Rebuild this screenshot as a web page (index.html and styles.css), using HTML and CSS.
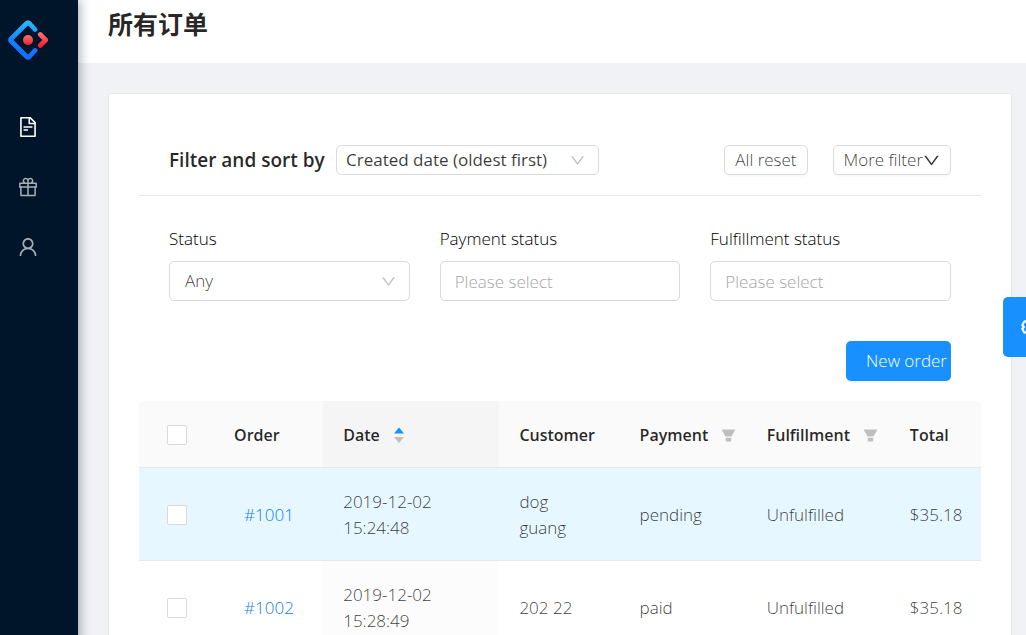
FILE: index.html
```html
<!DOCTYPE html>
<html lang="zh-CN">
<head>
<meta charset="utf-8">
<meta name="viewport" content="width=device-width, initial-scale=1">
<title>所有订单</title>
<link rel="stylesheet" href="styles.css">
</head>
<body>
<svg class="sprite" aria-hidden="true">
  <symbol id="down" viewBox="64 64 896 896"><path d="M884 256h-75c-5.100 0-9.900 2.500-12.900 6.600L512 654.200 227.900 262.600c-3-4.100-7.800-6.600-12.900-6.600h-75c-6.500 0-10.300 7.400-6.500 12.700l352.600 486.100c12.800 17.600 39 17.600 51.700 0l352.600-486.100c3.900-5.300.1-12.700-6.400-12.700z"/></symbol>
  <symbol id="filter" viewBox="64 64 896 896"><path d="M349 838c0 17.700 14.200 32 31.800 32h262.400c17.600 0 31.800-14.300 31.800-32V642H349v196zm531.100-684H143.900c-24.500 0-39.800 26.700-27.500 48l221.300 376h348.800l221.300-376c12.100-21.300-3.200-48-27.700-48z"/></symbol>
</svg>
<div class="layout">
  <aside class="sidebar">
    <a class="logo" href="#" aria-label="Home">
      <svg viewBox="0 0 40 40" width="40" height="40" fill="none" stroke-linecap="round" stroke-linejoin="round">
        <defs>
          <linearGradient id="blue" x1="0" y1="0" x2="0" y2="1"><stop offset="0" stop-color="#29b6ff"/><stop offset="0.5" stop-color="#1681ff"/><stop offset="1" stop-color="#0f6fff"/></linearGradient>
          <linearGradient id="red" x1="0" y1="0" x2="0" y2="1"><stop offset="0" stop-color="#ff6b70"/><stop offset="1" stop-color="#f5222d"/></linearGradient>
        </defs>
        <path d="M27 9.500L21.500 3.500Q20 2 18.500 3.500L3.200 18.700Q2 20 3.200 21.300L18.500 36.500Q20 38 21.500 36.500L27 30.500" stroke="url(#blue)" stroke-width="4.800"/>
        <path d="M32.200 14.500L37.700 20L32.200 25.500" stroke="url(#red)" stroke-width="4.600"/>
        <circle cx="20" cy="20" r="5" fill="url(#red)"/>
      </svg>
    </a>
    <nav class="menu">
      <a class="menu-item active" href="#" aria-label="Orders"><svg class="menu-icon" viewBox="64 64 896 896"><path d="M854.600 288.600L639.400 73.400c-6-6-14.100-9.400-22.600-9.400H192c-17.700 0-32 14.300-32 32v832c0 17.700 14.300 32 32 32h640c17.700 0 32-14.300 32-32V311.300c0-8.500-3.400-16.700-9.400-22.700zM790.200 326H602V137.800L790.200 326zm1.800 562H232V136h302v216a42 42 0 0042 42h216v494zM504 618H320c-4.400 0-8 3.600-8 8v48c0 4.400 3.600 8 8 8h184c4.400 0 8-3.600 8-8v-48c0-4.400-3.600-8-8-8zM312 490v48c0 4.400 3.600 8 8 8h384c4.400 0 8-3.600 8-8v-48c0-4.400-3.600-8-8-8H320c-4.400 0-8 3.600-8 8z"/></svg></a>
      <a class="menu-item" href="#" aria-label="Products"><svg class="menu-icon" viewBox="64 64 896 896"><path d="M880 310H732.400c13.600-21.400 21.600-46.800 21.600-74 0-76.100-61.900-138-138-138-41.400 0-78.700 18.400-104 47.400-25.300-29-62.600-47.400-104-47.400-76.100 0-138 61.900-138 138 0 27.200 7.900 52.600 21.600 74H144c-17.700 0-32 14.300-32 32v200c0 4.400 3.600 8 8 8h40v344c0 17.700 14.300 32 32 32h640c17.700 0 32-14.300 32-32V550h40c4.400 0 8-3.600 8-8V342c0-17.700-14.300-32-32-32zm-334-74c0-38.600 31.400-70 70-70s70 31.400 70 70-31.400 70-70 70h-70v-70zm-138-70c38.600 0 70 31.400 70 70v70h-70c-38.600 0-70-31.400-70-70s31.400-70 70-70zM180 482V378h298v104H180zm48 68h250v308H228V550zm568 308H546V550h250v308zm48-376H546V378h298v104z"/></svg></a>
      <a class="menu-item" href="#" aria-label="Customers"><svg class="menu-icon" viewBox="64 64 896 896"><path d="M858.500 763.600a374 374 0 00-80.600-119.500 375.630 375.630 0 00-119.500-80.600c-.4-.2-.8-.3-1.200-.5C719.500 518 760 444.700 760 362c0-137-111-248-248-248S264 225 264 362c0 82.700 40.500 156 102.800 201.100-.4.2-.8.3-1.200.5-44.800 18.900-85 46-119.500 80.600a375.630 375.630 0 00-80.600 119.500A371.700 371.700 0 00136 901.800a8 8 0 008 8.200h60c4.400 0 7.900-3.500 8-7.800 2-77.200 33-149.500 87.800-204.300 56.700-56.700 132-87.900 212.200-87.900s155.500 31.200 212.200 87.900C779 752.700 810 825 812 902.200c.1 4.400 3.600 7.800 8 7.800h60a8 8 0 008-8.200c-1-47.800-10.900-94.300-29.500-138.200zM512 534c-45.900 0-89.100-17.900-121.600-50.400S340 407.900 340 362c0-45.900 17.900-89.100 50.400-121.600S466.100 190 512 190s89.100 17.900 121.600 50.400S684 316.100 684 362c0 45.900-17.900 89.100-50.400 121.600S557.900 534 512 534z"/></svg></a>
    </nav>
  </aside>
  <div class="main">
    <header class="page-header"><h1>所有订单</h1></header>
    <main class="card">
      <div class="toolbar">
        <label class="toolbar-title" for="sort">Filter and sort by</label>
        <div class="select select-small">
          <select id="sort"><option>Created date (oldest first)</option></select>
          <svg class="chevron"><use href="#down"/></svg>
        </div>
        <div class="toolbar-actions">
          <button class="button" type="button">All reset</button>
          <button class="button" type="button">More filter<svg class="button-icon"><use href="#down"/></svg></button>
        </div>
      </div>
      <div class="filters">
        <div class="field">
          <label for="status">Status</label>
          <div class="select">
            <select id="status"><option>Any</option></select>
            <svg class="chevron"><use href="#down"/></svg>
          </div>
        </div>
        <div class="field">
          <label for="payment">Payment status</label>
          <input class="text-input" id="payment" type="text" placeholder="Please select">
        </div>
        <div class="field">
          <label for="fulfillment">Fulfillment status</label>
          <input class="text-input" id="fulfillment" type="text" placeholder="Please select">
        </div>
      </div>
      <div class="actions"><button class="primary" type="button">New order</button></div>
      <table class="orders">
        <colgroup><col class="col-check"><col class="col-order"><col class="col-date"><col class="col-customer"><col class="col-payment"><col class="col-fulfillment"><col class="col-total"></colgroup>
        <thead>
          <tr>
            <th class="check"><input type="checkbox" aria-label="Select all"></th>
            <th>Order</th>
            <th class="sorted"><span class="heading">Date<svg class="sorter" viewBox="0 0 12 18"><path class="sort-up" d="M6 1.500L11 7.500H1z"/><path class="sort-down" d="M1 11H11L6 17z"/></svg></span></th>
            <th>Customer</th>
            <th><span class="heading">Payment<svg class="filter-icon"><use href="#filter"/></svg></span></th>
            <th><span class="heading">Fulfillment<svg class="filter-icon"><use href="#filter"/></svg></span></th>
            <th>Total</th>
          </tr>
        </thead>
        <tbody>
          <tr class="hovered">
            <td class="check"><input type="checkbox" aria-label="Select #1001"></td>
            <td><a class="order-link" href="#">#1001</a></td>
            <td class="sorted">2019-12-02 15:24:48</td>
            <td>dog<br>guang</td>
            <td>pending</td>
            <td>Unfulfilled</td>
            <td>$35.18</td>
          </tr>
          <tr>
            <td class="check"><input type="checkbox" aria-label="Select #1002"></td>
            <td><a class="order-link" href="#">#1002</a></td>
            <td class="sorted">2019-12-02 15:28:49</td>
            <td>202 22</td>
            <td>paid</td>
            <td>Unfulfilled</td>
            <td>$35.18</td>
          </tr>
        </tbody>
      </table>
    </main>
  </div>
</div>
<button class="settings" type="button" aria-label="Settings">
  <svg viewBox="0 0 24 24" width="24" height="24" fill="none" stroke="#fff" stroke-width="2" stroke-linejoin="round"><circle cx="12" cy="12" r="3.500"/><path d="M9 3h6l.8 2.600 2 1.200 2.700-.6 2.300 4-1.800 1.800 1.800 1.800-2.300 4-2.700-.6-2 1.200L15 21H9l-.8-2.600-2-1.200-2.700.6-2.300-4L3 12 1.200 10.200l2.300-4 2.700.6 2-1.200z"/></svg>
</button>
</body>
</html>
```
FILE: styles.css
```css
* {
  box-sizing: border-box;
}

body {
  margin: 0;
  height: 100vh;
  overflow: hidden;
  background: #f0f2f5;
  color: rgba(0, 0, 0, 0.78);
  font-family: "Open Sans", "Noto Sans CJK SC", sans-serif;
  font-size: 17px;
  font-weight: 300;
  line-height: 26px;
}

button,
input,
select {
  font: inherit;
  color: inherit;
}

svg {
  fill: currentColor;
}

.sprite {
  display: none;
}

.layout {
  display: flex;
  min-height: 100vh;
}

.sidebar {
  flex: 0 0 78px;
  z-index: 1;
  padding-top: 20px;
  background: #001529;
  box-shadow: 2px 0 10px rgba(0, 21, 41, 0.35);
}

.logo {
  display: block;
  height: 40px;
  padding-left: 8px;
}

.logo svg {
  display: block;
  fill: none;
}

.menu {
  display: flex;
  flex-direction: column;
  padding-top: 37px;
}

.menu-item {
  display: flex;
  align-items: center;
  height: 60px;
  padding-left: 18px;
  color: rgba(255, 255, 255, 0.65);
}

.menu-item.active {
  color: #fff;
}

.menu-icon {
  width: 20px;
  height: 20px;
}

.main {
  flex: 1;
  min-width: 0;
}

.page-header {
  height: 63px;
  padding: 3px 30px;
  background: #fff;
}

h1 {
  margin: 0;
  color: rgba(0, 0, 0, 0.85);
  font-family: "Noto Sans CJK SC", sans-serif;
  font-size: 25px;
  font-weight: 700;
  line-height: 40px;
}

.card {
  margin: 30px 14px 30px 30px;
  padding: 30px;
  border: 1px solid #e8e8e8;
  border-radius: 2px;
  background: #fff;
}

.toolbar {
  display: flex;
  align-items: center;
  padding: 21px 30px 20px;
  border-bottom: 1px solid #e8e8e8;
}

.toolbar-title {
  width: 167px;
  color: rgba(0, 0, 0, 0.85);
  font-size: 19px;
  font-weight: 600;
  white-space: nowrap;
}

.select {
  position: relative;
  display: flex;
}

.select select {
  width: 100%;
  height: 40px;
  padding: 0 40px 0 15px;
  border: 1px solid #d9d9d9;
  border-radius: 5px;
  background: #fff;
  appearance: none;
}

.select-small {
  width: 263px;
}

.select-small select {
  height: 30px;
  padding-left: 9px;
  font-weight: 500;
}

.chevron {
  position: absolute;
  top: 0;
  right: 14px;
  bottom: 0;
  width: 15px;
  height: 15px;
  margin: auto;
  color: #bfbfbf;
  pointer-events: none;
}

.toolbar-actions {
  display: flex;
  gap: 25px;
  margin-left: auto;
}

.button {
  display: flex;
  align-items: center;
  height: 30px;
  padding: 0 10px;
  border: 1px solid #d9d9d9;
  border-radius: 5px;
  background: #fff;
  box-shadow: 0 2px 0 rgba(0, 0, 0, 0.02);
  white-space: nowrap;
}

.button-icon {
  width: 17px;
  height: 17px;
}

.filters {
  display: grid;
  grid-template-columns: repeat(3, 1fr);
  gap: 30px;
  padding: 30px 30px 40px;
}

.field {
  display: flex;
  flex-direction: column;
  gap: 9px;
}

.field label {
  color: #000;
}

.text-input {
  width: 100%;
  height: 40px;
  padding: 0 14px;
  border: 1px solid #d9d9d9;
  border-radius: 5px;
}

.text-input::placeholder {
  color: #a6a6a6;
}

.actions {
  display: flex;
  justify-content: flex-end;
  padding: 0 30px 20px;
}

.primary {
  height: 40px;
  padding: 0 4px 0 20px;
  border: 0;
  border-radius: 5px;
  background: #1890ff;
  box-shadow: 0 2px 0 rgba(0, 0, 0, 0.04);
  color: #fff;
  white-space: nowrap;
}

.orders {
  width: 100%;
  table-layout: fixed;
  border-collapse: separate;
  border-spacing: 0;
  text-align: left;
}

.col-check { width: 75px; }
.col-order { width: 109px; }
.col-date { width: 176px; }
.col-customer { width: 120px; }
.col-payment { width: 127px; }
.col-fulfillment { width: 143px; }
.col-total { width: 91px; }

.orders th,
.orders td {
  padding: 21px 20px 19px;
  border-bottom: 1px solid #e8e8e8;
}

.orders th {
  background: #fafafa;
  color: rgba(0, 0, 0, 0.85);
  font-size: 16px;
  font-weight: 600;
}

.orders th:first-child {
  border-top-left-radius: 5px;
}

.orders th:last-child {
  border-top-right-radius: 5px;
}

.orders th.sorted {
  background: #f5f5f5;
}

.orders td {
  height: 93px;
}

.orders td.sorted {
  padding-right: 60px;
  background: #fcfcfc;
}

.orders .hovered td {
  background: #e6f7ff;
}

.orders .check {
  padding: 2px 0 0;
  text-align: center;
}

.check input {
  display: block;
  width: 20px;
  height: 20px;
  margin: 0 auto;
  border: 1px solid #d9d9d9;
  border-radius: 2px;
  background: #fff;
  appearance: none;
}

.heading {
  display: flex;
  align-items: center;
  gap: 13px;
}

.sorter {
  width: 12px;
  height: 18px;
}

.sort-up {
  fill: #1890ff;
}

.sort-down {
  fill: #bfbfbf;
}

.filter-icon {
  flex: none;
  width: 15px;
  height: 15px;
  color: #bfbfbf;
}

.order-link {
  padding-left: 10px;
  color: #1080f0;
  text-decoration: none;
}

.settings {
  position: fixed;
  top: 297px;
  right: -37px;
  display: flex;
  align-items: center;
  justify-content: center;
  width: 60px;
  height: 60px;
  padding: 0;
  border: 0;
  border-radius: 5px 0 0 5px;
  background: #1890ff;
}

.settings svg {
  fill: none;
}
```
